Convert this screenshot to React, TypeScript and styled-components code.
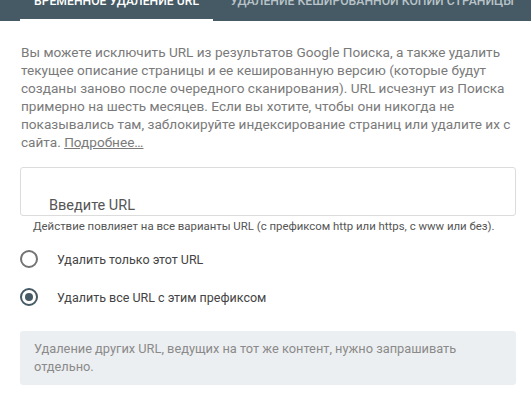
import styled, { createGlobalStyle } from 'styled-components'

const Global = createGlobalStyle`
    html, body {
        margin: 0;
        padding: 0;
        background: #fff;
        font-family: Roboto, "Noto Sans", Arial, sans-serif;
        overflow: hidden;
    }
`

const Page = styled.div`
    width: 531px;
    height: 393px;
    overflow: hidden;
`

const TabBar = styled.div`
    display: flex;
    height: 39px;
    margin-top: -18px;
    background: #455a64;
    padding-left: 20px;
`

const Tab = styled.div<{ $active?: boolean; $width: number }>`
    width: ${p => p.$width}px;
    display: flex;
    align-items: center;
    justify-content: center;
    box-sizing: border-box;
    font-size: 12.2px;
    font-weight: 500;
    white-space: nowrap;
    color: ${p => (p.$active ? '#ffffff' : '#b9c3c8')};
    border-bottom: 2px solid ${p => (p.$active ? '#ffffff' : 'transparent')};
`

const Content = styled.div`
    padding: 22px 15px 0 20px;
`

const Intro = styled.p`
    margin: 0 0 0 1px;
    font-size: 13.6px;
    line-height: 18px;
    color: #7a7a7a;
    a {
        color: #7a7a7a;
        text-decoration: underline;
    }
`

const InputBox = styled.div`
    margin-top: 16px;
    height: 49px;
    border: 1px solid #dcdcdc;
    border-radius: 3px;
    box-sizing: border-box;
    display: flex;
    align-items: flex-end;
    padding: 0 0 1px 28px;
    font-size: 14.5px;
    color: #555;
`

const Hint = styled.div`
    margin: 4px 0 0 13px;
    font-size: 11.4px;
    line-height: 13px;
    color: #555;
`

const Options = styled.div`
    margin-top: 16px;
    display: flex;
    flex-direction: column;
    gap: 18px;
`

const Option = styled.label`
    display: flex;
    align-items: center;
    gap: 19px;
    font-size: 12.5px;
    color: #444;
    height: 20px;
`

const Radio = styled.span<{ $checked?: boolean }>`
    width: 18px;
    height: 18px;
    box-sizing: border-box;
    border-radius: 50%;
    border: 2px solid ${p => (p.$checked ? '#455a64' : '#737373')};
    display: flex;
    align-items: center;
    justify-content: center;
    &::after {
        content: '';
        width: 8px;
        height: 8px;
        border-radius: 50%;
        background: ${p => (p.$checked ? '#455a64' : 'transparent')};
    }
`

const Note = styled.div`
    margin-top: 24px;
    background: #eceff1;
    border-radius: 3px;
    padding: 9px 14px 9px;
    font-size: 12.8px;
    line-height: 18px;
    color: #8a8a8a;
`

export default function App() {
    return (
        <Page>
            <Global />
            <TabBar>
                <Tab $active $width={193}>ВРЕМЕННОЕ УДАЛЕНИЕ URL</Tab>
                <Tab $width={318}>УДАЛЕНИЕ КЕШИРОВАННОЙ КОПИИ СТРАНИЦЫ</Tab>
            </TabBar>
            <Content>
                <Intro>
                    Вы можете исключить URL из результатов Google Поиска, а также удалить
                    текущее описание страницы и ее кешированную версию (которые будут
                    созданы заново после очередного сканирования). URL исчезнут из Поиска
                    примерно на шесть месяцев. Если вы хотите, чтобы они никогда не
                    показывались там, заблокируйте индексирование страниц или удалите их с
                    сайта. <a href="#">Подробнее…</a>
                </Intro>
                <InputBox>Введите URL</InputBox>
                <Hint>Действие повлияет на все варианты URL (с префиксом http или https, с www или без).</Hint>
                <Options>
                    <Option><Radio />Удалить только этот URL</Option>
                    <Option><Radio $checked />Удалить все URL с этим префиксом</Option>
                </Options>
                <Note>
                    Удаление других URL, ведущих на тот же контент, нужно запрашивать
                    отдельно.
                </Note>
            </Content>
        </Page>
    )
}
